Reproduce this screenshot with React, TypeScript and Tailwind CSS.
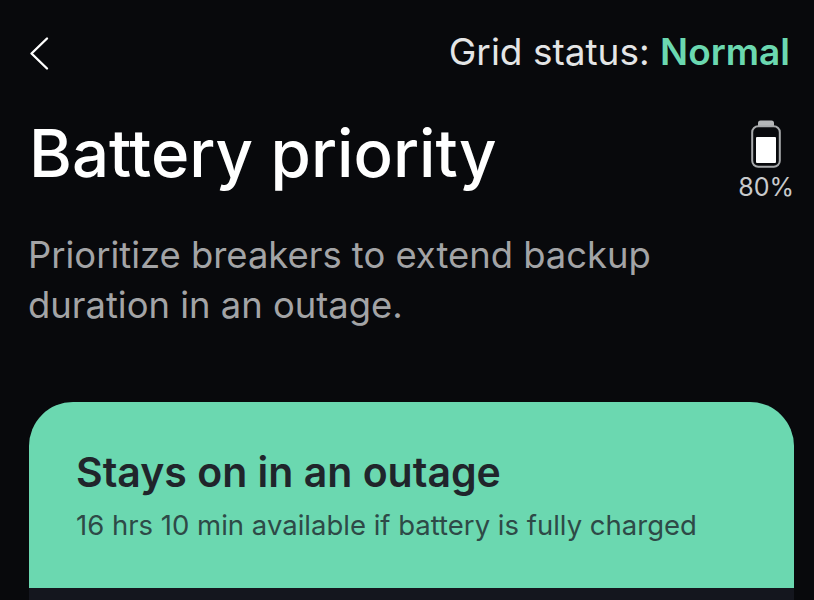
function BackIcon() {
  return (
    <svg className="h-[35px] w-[22px]" viewBox="0 0 22 35" fill="none" aria-hidden>
      <path d="M19 2.5L3.5 17.5 19 32.5" stroke="#ffffff" strokeWidth="2.4" strokeLinecap="round" strokeLinejoin="round" />
    </svg>
  );
}

function BatteryIcon() {
  return (
    <svg className="h-[48px] w-[30px]" viewBox="0 0 30 48" fill="none" aria-hidden>
      <path d="M7 3a2.5 2.5 0 012.5-2.5h11A2.5 2.5 0 0123 3v4H7z" fill="#b4b6b8" />
      <rect x="1.2" y="6.2" width="27.6" height="40.6" rx="6" fill="#08090c" stroke="#a8aaac" strokeWidth="2" />
      <rect x="5" y="17" width="20" height="26" rx="1" fill="#ffffff" />
    </svg>
  );
}

export default function App() {
  return (
    <div className="h-[600px] w-[814px] overflow-hidden bg-[#08090c] font-['Inter',sans-serif]">
      <div className="flex h-[106px] items-start justify-between pl-[28px] pr-[24px] pt-[30px]">
        <div className="pt-[6px]">
          <BackIcon />
        </div>
        <div className="pt-[2px] text-[37px] leading-[40px] text-[#e4e5e6]">
          Grid status: <span className="font-semibold text-[#6bd8b0]">Normal</span>
        </div>
      </div>

      <div className="flex h-[124px] items-start justify-between pl-[29px] pr-[20px]">
        <h1 className="text-[65.3px] font-medium leading-[96px] text-white">Battery priority</h1>
        <div className="flex flex-col items-center pt-[14px]">
          <BatteryIcon />
          <span className="pt-[5px] text-[25px] leading-[28px] text-[#c8cacc]">80%</span>
        </div>
      </div>

      <p className="pl-[28px] text-[36.4px] leading-[50px] text-[#a3a4a6]">
        Prioritize breakers to extend backup
        <br />
        duration in an outage.
      </p>

      <div className="ml-[29px] mr-[20px] mt-[72px] overflow-hidden rounded-t-[44px] bg-[#14161e]">
        <div className="h-[186px] bg-[#6bd8b0] px-[47px] pt-[46px]">
          <h2 className="text-[41px] font-semibold leading-[48px] text-[#20252b]">Stays on in an outage</h2>
          <p className="pt-[13px] text-[27.5px] leading-[32px] text-[#2e4a47]">
            16 hrs 10 min available if battery is fully charged
          </p>
        </div>
        <div className="h-[20px]" />
      </div>
    </div>
  );
}
